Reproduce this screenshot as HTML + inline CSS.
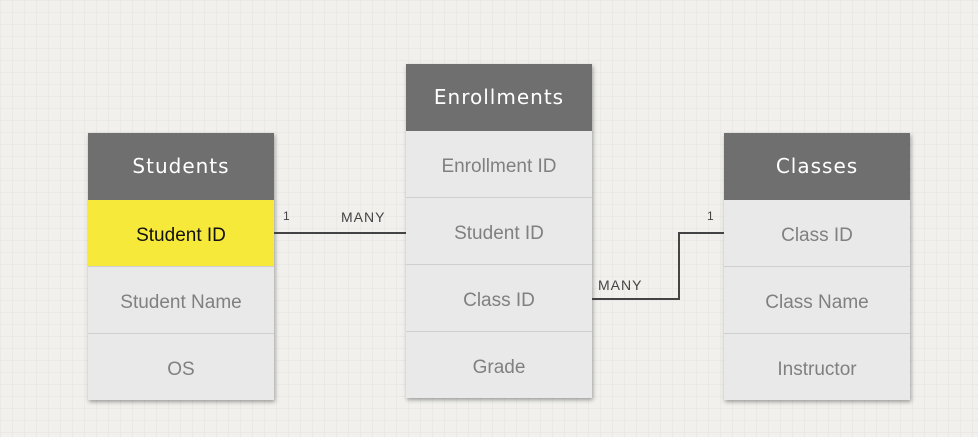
<!DOCTYPE html><html><head><style>
body{margin:0;width:978px;height:437px;overflow:hidden;background:#f1f0ed;
background-image:linear-gradient(#eae9e6 1px,transparent 1px),linear-gradient(90deg,#eae9e6 1px,transparent 1px);background-size:12px 12px;font-family:"Liberation Sans",sans-serif;position:relative}
.t{position:absolute;width:186px;box-shadow:1px 2px 4px rgba(0,0,0,.35)}
.h{height:67px;background:#6f6f6f;color:#fff;font-size:20px;line-height:67px;text-align:center;font-family:"DejaVu Sans",sans-serif;letter-spacing:1px}
.r{height:66px;border-top:1px solid #cfcfcf;background:#e9e9e9;color:#808080;font-size:19px;line-height:72px;text-align:center}
.y{background:#f7e93a;color:#111}
.l{position:absolute;background:#444}
.lab{position:absolute;font-size:14px;color:#444;letter-spacing:1px}
</style></head><body>
<div class="t" style="left:88px;top:133px"><div class="h">Students</div><div class="r y" style="border-top:none">Student ID</div><div class="r">Student Name</div><div class="r">OS</div></div>
<div class="t" style="left:406px;top:64px"><div class="h">Enrollments</div><div class="r" style="border-top:none">Enrollment ID</div><div class="r">Student ID</div><div class="r">Class ID</div><div class="r">Grade</div></div>
<div class="t" style="left:724px;top:133px"><div class="h">Classes</div><div class="r" style="border-top:none">Class ID</div><div class="r">Class Name</div><div class="r">Instructor</div></div>
<div class="l" style="left:274px;top:232px;width:132px;height:2px"></div>
<div class="l" style="left:592px;top:298px;width:88px;height:2px"></div>
<div class="l" style="left:678px;top:232px;width:2px;height:68px"></div>
<div class="l" style="left:678px;top:232px;width:46px;height:2px"></div>
<div class="lab" style="left:283px;top:209px;font-size:12px">1</div>
<div class="lab" style="left:341px;top:209px">MANY</div>
<div class="lab" style="left:707px;top:209px;font-size:12px">1</div>
<div class="lab" style="left:598px;top:277px">MANY</div>
</body></html>
